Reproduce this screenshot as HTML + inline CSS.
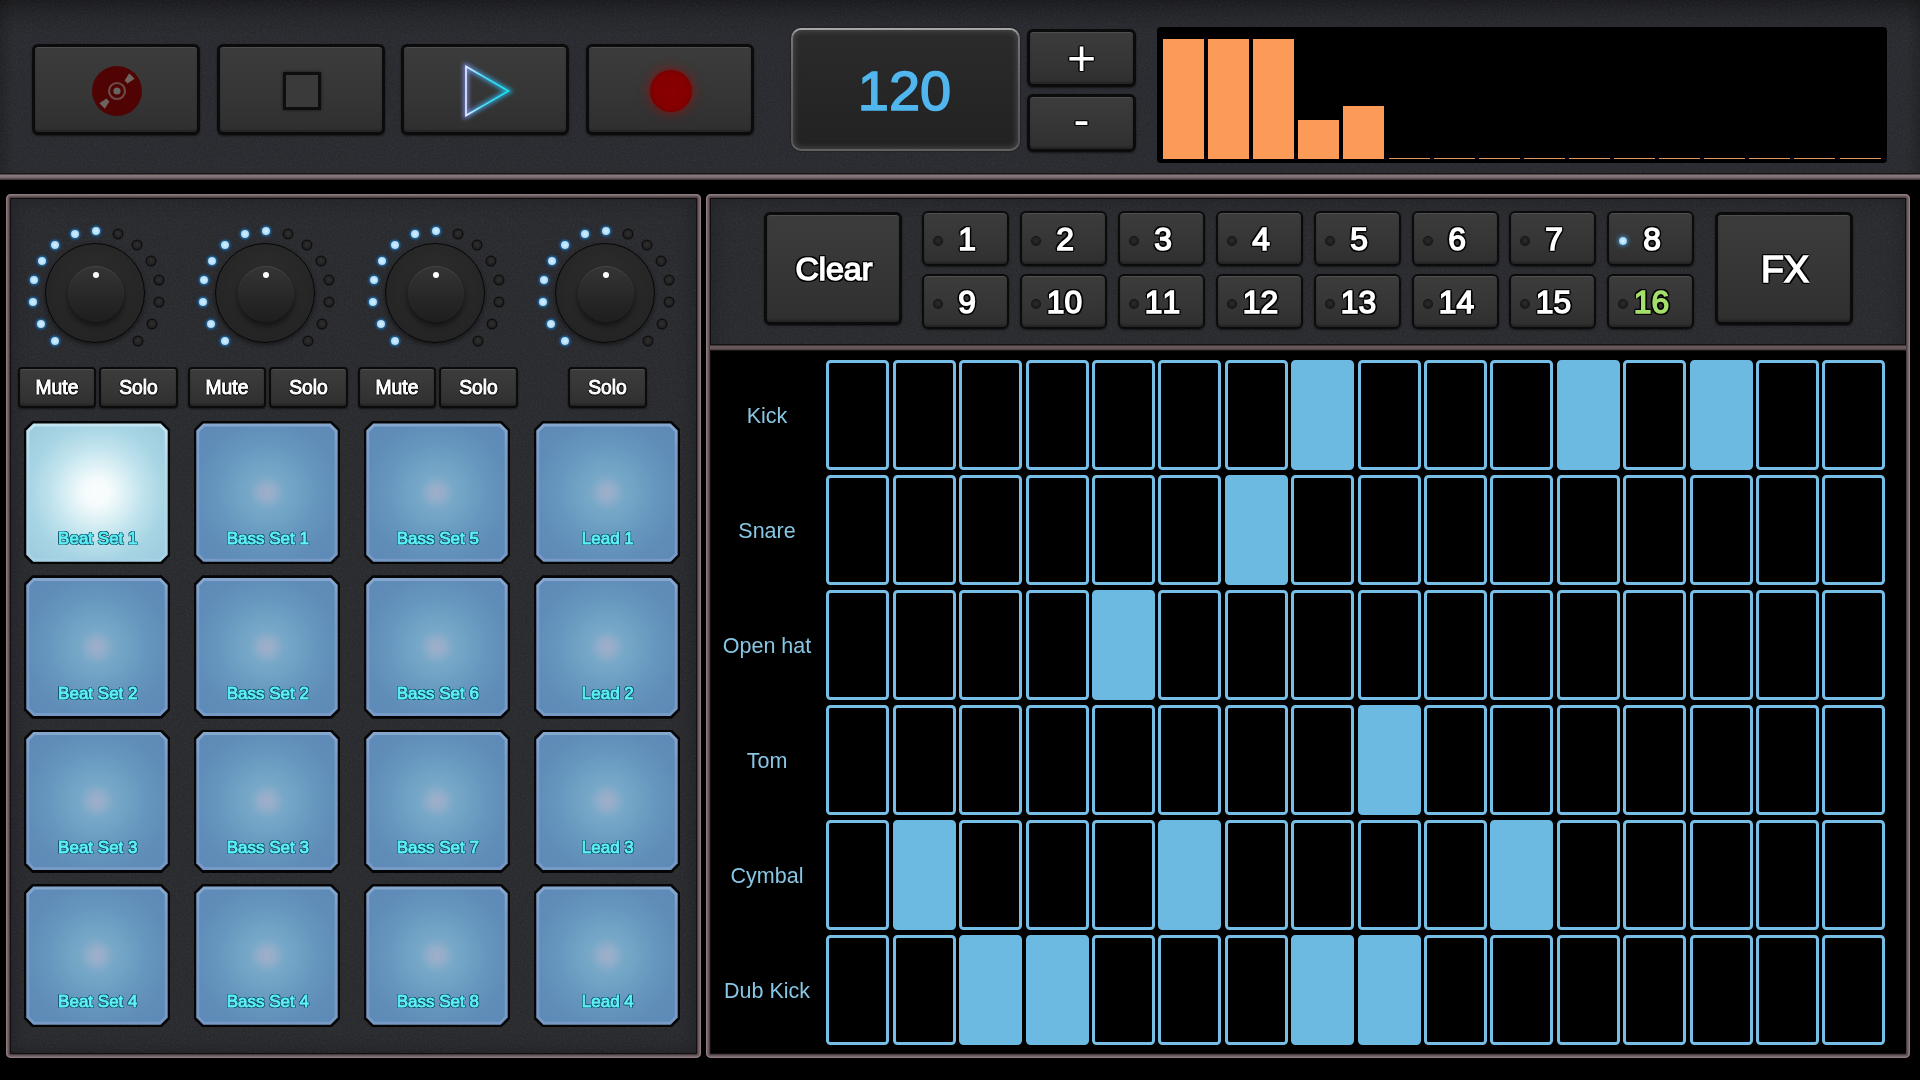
<!DOCTYPE html>
<html><head><meta charset="utf-8"><title>Beat Sequencer</title>
<style>
*{box-sizing:border-box;margin:0;padding:0}
html,body{width:1920px;height:1080px;background:#000;overflow:hidden;font-family:"Liberation Sans",sans-serif}
.abs,.btn,.pad,.cell,.led,.lbl,.knob,.bar{position:absolute}
#top{position:absolute;left:0;top:0;width:1920px;height:174px;background:linear-gradient(rgba(0,0,0,.36) 0,rgba(0,0,0,.2) 10px,rgba(0,0,0,.06) 24px,rgba(0,0,0,0) 36px),linear-gradient(90deg,rgba(0,0,0,.18) 0,rgba(0,0,0,0) 14px,rgba(0,0,0,0) calc(100% - 14px),rgba(0,0,0,.18) 100%),#2b2c31}
#topline{position:absolute;left:0;top:173px;width:1920px;height:7px;background:linear-gradient(#1a1516 0,#1a1516 1px,#8b7b7e 2px,#837275 4px,#5a4b4e 6px,#2a2022 7px)}
.panel{position:absolute;background:#2b2c30;border-radius:5px;box-shadow:inset 0 0 0 1.5px #8b7b7e,inset 0 0 0 3px #66575a,inset 0 0 0 4px #4b3e41,inset 0 0 0 5px #120e10,inset 0 0 16px 8px rgba(0,0,0,.22)}
.btn{background:linear-gradient(#3c3c3c,#353535 60%,#2f2f2f);border:3px solid #0b0b0c;border-radius:6px;box-shadow:inset 0 1px 0 rgba(255,255,255,.10),inset 0 -2px 2px rgba(0,0,0,.25),0 1px 2px rgba(0,0,0,.55);color:#fff;display:flex;align-items:center;justify-content:center;text-shadow:2.4px 0px .5px rgba(0,0,0,.85),-2.4px 0px .5px rgba(0,0,0,.85),0px 2.4px .5px rgba(0,0,0,.85),0px -2.4px .5px rgba(0,0,0,.85),1.7px 1.7px .5px rgba(0,0,0,.85),-1.7px 1.7px .5px rgba(0,0,0,.85),1.7px -1.7px .5px rgba(0,0,0,.85),-1.7px -1.7px .5px rgba(0,0,0,.85)}
.btn span{display:block}
.num{font-kerning:none;font-size:31.8px;-webkit-text-stroke:1.5px currentColor;padding-top:2px;border-width:2.2px}
.num i{position:absolute;left:10.3px;top:50%;width:8px;height:8px;margin-top:-1.5px;border-radius:50%;background:radial-gradient(circle at 50% 45%,#2e2e2e 0,#1c1c1c 60%,#101010 100%);box-shadow:0 0 0 1px #151515}
.num i.on{background:radial-gradient(circle,#e8f6ff 0,#a8dcff 55%,#58b4f0 100%);box-shadow:0 0 4px 1px rgba(70,160,230,.8)}
.ms{text-shadow:1.5px 0px 0.5px rgba(0,0,0,0.55),-1.5px 0px 0.5px rgba(0,0,0,0.55),0px 1.5px 0.5px rgba(0,0,0,0.55),0px -1.5px 0.5px rgba(0,0,0,0.55),1.06px 1.06px 0.5px rgba(0,0,0,0.55),-1.06px 1.06px 0.5px rgba(0,0,0,0.55),1.06px -1.06px 0.5px rgba(0,0,0,0.55),-1.06px -1.06px 0.5px rgba(0,0,0,0.55);font-size:19.3px;-webkit-text-stroke:1px #fff;padding-top:1px;border-width:2px;border-radius:4px}
.pad{background:#050506;clip-path:polygon(8.6px 0,calc(100% - 8.6px) 0,100% 8.6px,100% calc(100% - 8.6px),calc(100% - 8.6px) 100%,8.6px 100%,0 calc(100% - 8.6px),0 8.6px)}
.pad .pb{position:absolute;left:2.6px;top:2.6px;right:2.6px;bottom:2.6px;background:linear-gradient(#86a8cf,#7a9cc9 20%,#7799c6);clip-path:polygon(7.1px 0,calc(100% - 7.1px) 0,100% 7.1px,100% calc(100% - 7.1px),calc(100% - 7.1px) 100%,7.1px 100%,0 calc(100% - 7.1px),0 7.1px)}
.pad .pf{position:absolute;left:3px;top:3px;right:3px;bottom:3px;clip-path:polygon(5.3px 0,calc(100% - 5.3px) 0,100% 5.3px,100% calc(100% - 5.3px),calc(100% - 5.3px) 100%,5.3px 100%,0 calc(100% - 5.3px),0 5.3px);background:radial-gradient(circle at 50% 50%,#a1adca 0,#92aeca 8%,#78a8c8 18%,#6fa2c4 32%,#6696be 52%,#5f8db8 75%,#5d89b6 100%)}
.pad.on .pb{background:linear-gradient(#c4e6f2,#b5dcec 25%,#a9d2e8)}
.pad.on .pf{background:radial-gradient(circle at 50% 50%,#fbfdfd 0,#f6fbfc 13%,#dff2f6 28%,#c2e4ee 47%,#a8d5e4 70%,#9ccbde 100%)}
.pad span{position:absolute;left:1px;right:0;top:108.6px;text-align:center;font-size:17px;color:#5ef0f8;-webkit-text-stroke:.9px #5ef0f8;text-shadow:-1px 0 0 #0f4a5c,1px 0 0 #0f4a5c,0 -1px 0 #0f4a5c,0 1px 0 #0f4a5c,1px 1px 0 #0f4a5c,-1px -1px 0 #0f4a5c,1px -1px 0 #0f4a5c,-1px 1px 0 #0f4a5c}
.cell{width:63px;height:110.4px;border:3.7px solid #76bee5;border-radius:4.5px;background:#000}
.cell.on{background:#6cb9e1;border-color:#6cb9e1}
.lbl{width:118px;text-align:center;font-size:21.5px;color:#88c6e5;line-height:24px}
.led{width:8px;height:8px;border-radius:50%}
.led.on{background:radial-gradient(circle,#d8f0ff 0,#b4e0fc 55%,#86c8f0 100%);box-shadow:0 0 1.5px 1.5px rgba(30,100,155,.9),0 0 4px 2px rgba(25,85,140,.3)}
.led.off{background:radial-gradient(circle at 50% 45%,#303030 0,#262626 45%,#151515 100%);box-shadow:0 0 0 1.5px #0f0f0f}
.knob{width:100px;height:100px;border-radius:50%;background:radial-gradient(circle at 50% 40%,#2e2e2e 0,#262626 60%,#202020 100%);border:1.5px solid #050505;box-shadow:0 2px 4px rgba(0,0,0,.5)}
.knob b{position:absolute;left:21.5px;top:22px;width:56px;height:56px;border-radius:50%;background:linear-gradient(#353535,#262626 60%,#1e1e1e);box-shadow:0 4px 6px rgba(0,0,0,.55),inset 0 1px 0 rgba(255,255,255,.08)}
.knob u{position:absolute;left:47px;top:27.9px;width:6px;height:6px;border-radius:50%;background:#fff}
.bar{background:#fc9b57}
.btn,.pad span,.lbl,.tempo{will-change:transform}
</style></head><body>
<div id="top"></div><svg width="0" height="0" style="position:absolute"><defs><filter id="nz" x="0" y="0" width="100%" height="100%"><feTurbulence type="fractalNoise" baseFrequency=".55" numOctaves="2" seed="7" result="t"/><feColorMatrix in="t" type="matrix" values="0 0 0 0 1  0 0 0 0 1  0 0 0 0 1  .9 .9 .9 0 -1.15"/></filter><filter id="nzd" x="0" y="0" width="100%" height="100%"><feTurbulence type="fractalNoise" baseFrequency=".55" numOctaves="2" seed="19" result="t"/><feColorMatrix in="t" type="matrix" values="0 0 0 0 0  0 0 0 0 0  0 0 0 0 0  .9 .9 .9 0 -1.15"/></filter></defs></svg><svg class="abs" style="left:0px;top:0px" width="1920" height="173"><rect width="1920" height="173" filter="url(#nz)" opacity=".05"/><rect width="1920" height="173" filter="url(#nzd)" opacity=".10"/></svg><div id="topline"></div>

<div class="btn" style="left:32px;top:44px;width:168px;height:91px"><div style="margin-top:3px;margin-left:2px;display:flex"><svg width="60" height="60" viewBox="-30 -30 60 60"><circle r="25" fill="#500303"/><circle r="8" fill="none" stroke="#6b4a48" stroke-width="2.2"/><circle r="3.6" fill="#66665e"/><path d="M10.5 -7.6 L17.7 -12.2 L12.2 -17.7 L7.6 -10.5 Z M-10.5 7.6 L-17.7 12.2 L-12.2 17.7 L-7.6 10.5 Z" fill="#6e6360"/></svg></div></div>
<div class="btn" style="left:217px;top:44px;width:168px;height:91px"><div style="margin-top:3px;margin-left:2px;display:flex"><div style="width:38px;height:38px;border:3px solid #0e0e0e;background:#3a3a3a;box-shadow:0 0 3px rgba(0,0,0,.6)"></div></div></div>
<div class="btn" style="left:401px;top:44px;width:168px;height:91px"><div style="margin-top:3px;margin-left:2px;display:flex"><svg width="70" height="70" viewBox="-35 -35 70 70" style="overflow:visible"><defs><linearGradient id="pg" gradientUnits="userSpaceOnUse" x1="-20" x2="23" y1="0" y2="0"><stop offset="0" stop-color="#eef0ff"/><stop offset=".12" stop-color="#b8ecfb"/><stop offset=".4" stop-color="#48dcf2"/><stop offset="1" stop-color="#14e2f0"/></linearGradient><linearGradient id="pg2" gradientUnits="userSpaceOnUse" x1="-20" x2="23" y1="0" y2="0"><stop offset="0" stop-color="#7f8fea"/><stop offset=".25" stop-color="#4a9ae0"/><stop offset="1" stop-color="#20b4d8"/></linearGradient><filter id="gl" x="-50%" y="-50%" width="200%" height="200%"><feGaussianBlur stdDeviation="2"/></filter></defs><path d="M-20 -24.5 L22.5 0 L-20 24.5 Z" fill="none" stroke="url(#pg2)" stroke-width="5" filter="url(#gl)" opacity=".85"/><path d="M-20 -24.5 L22.5 0 L-20 24.5 Z" fill="none" stroke="url(#pg)" stroke-width="1.6" stroke-linejoin="miter"/></svg></div></div>
<div class="btn" style="left:586px;top:44px;width:168px;height:91px"><div style="margin-top:3px;margin-left:2px;display:flex"><div style="width:42px;height:42px;margin-left:-1px;margin-top:-1px;border-radius:50%;background:radial-gradient(circle at 50% 50%,#890000 0,#850000 55%,#700000 82%,#580000 100%);box-shadow:0 0 9px 5px rgba(150,22,22,.36),0 0 3px 1px rgba(120,10,10,.5)"></div></div></div>
<div class="abs" style="left:791px;top:28px;width:229px;height:123px;border-radius:10px;background:linear-gradient(#adadad,#747474 7%,#5e5e5e 50%,#555 92%,#626262);box-shadow:0 0 2px rgba(0,0,0,.7)"></div>
<div class="abs tempo" style="left:793px;top:30px;width:225px;height:119px;border-radius:8.5px;background:linear-gradient(#2b2b2b,#222);box-shadow:inset 0 0 5px 2px rgba(90,90,90,.55);display:flex;align-items:center;justify-content:center;color:#52b6ee;font-size:56px;padding-top:1px;padding-right:2px;-webkit-text-stroke:1.5px #52b6ee;text-shadow:0 0 2px #0a2a44">120</div>
<div class="btn" style="left:1027px;top:29px;width:109px;height:58px;font-size:50px;-webkit-text-stroke:0;text-shadow:1.3px 0px 0.5px rgba(0,0,0,0.85),-1.3px 0px 0.5px rgba(0,0,0,0.85),0px 1.3px 0.5px rgba(0,0,0,0.85),0px -1.3px 0.5px rgba(0,0,0,0.85),0.92px 0.92px 0.5px rgba(0,0,0,0.85),-0.92px 0.92px 0.5px rgba(0,0,0,0.85),0.92px -0.92px 0.5px rgba(0,0,0,0.85),-0.92px -0.92px 0.5px rgba(0,0,0,0.85)"><span style="margin-top:.5px">+</span></div>
<div class="btn" style="left:1027px;top:94px;width:109px;height:58px;font-size:48px;-webkit-text-stroke:0;text-shadow:1.3px 0px 0.5px rgba(0,0,0,0.85),-1.3px 0px 0.5px rgba(0,0,0,0.85),0px 1.3px 0.5px rgba(0,0,0,0.85),0px -1.3px 0.5px rgba(0,0,0,0.85),0.92px 0.92px 0.5px rgba(0,0,0,0.85),-0.92px 0.92px 0.5px rgba(0,0,0,0.85),0.92px -0.92px 0.5px rgba(0,0,0,0.85),-0.92px -0.92px 0.5px rgba(0,0,0,0.85)"><span style="margin-top:-8px">-</span></div>
<div class="abs" style="left:1157px;top:27px;width:730px;height:136px;background:#000;border-radius:4px"></div>
<div class="bar" style="left:1163.0px;top:39px;width:41px;height:119.6px"></div>
<div class="bar" style="left:1208.1px;top:39px;width:41px;height:119.6px"></div>
<div class="bar" style="left:1253.2px;top:39px;width:41px;height:119.6px"></div>
<div class="bar" style="left:1298.3px;top:120px;width:41px;height:38.6px"></div>
<div class="bar" style="left:1343.4px;top:106px;width:41px;height:52.6px"></div>
<div class="bar" style="left:1388.5px;top:158px;width:41px;height:1px;background:#e0955c"></div>
<div class="bar" style="left:1433.6px;top:158px;width:41px;height:1px;background:#e0955c"></div>
<div class="bar" style="left:1478.7px;top:158px;width:41px;height:1px;background:#e0955c"></div>
<div class="bar" style="left:1523.8px;top:158px;width:41px;height:1px;background:#e0955c"></div>
<div class="bar" style="left:1568.9px;top:158px;width:41px;height:1px;background:#e0955c"></div>
<div class="bar" style="left:1614.0px;top:158px;width:41px;height:1px;background:#e0955c"></div>
<div class="bar" style="left:1659.1px;top:158px;width:41px;height:1px;background:#e0955c"></div>
<div class="bar" style="left:1704.2px;top:158px;width:41px;height:1px;background:#e0955c"></div>
<div class="bar" style="left:1749.3px;top:158px;width:41px;height:1px;background:#e0955c"></div>
<div class="bar" style="left:1794.4px;top:158px;width:41px;height:1px;background:#e0955c"></div>
<div class="bar" style="left:1839.5px;top:158px;width:41px;height:1px;background:#e0955c"></div>
<div class="panel" style="left:6px;top:194px;width:695px;height:864px"></div>
<div class="panel" style="left:706px;top:194px;width:1204px;height:864px"></div>
<svg class="abs" style="left:11px;top:199px" width="685" height="854"><rect width="685" height="854" filter="url(#nz)" opacity=".05"/><rect width="685" height="854" filter="url(#nzd)" opacity=".10"/></svg>
<svg class="abs" style="left:711px;top:199px" width="1194" height="146"><rect width="1194" height="146" filter="url(#nz)" opacity=".05"/><rect width="1194" height="146" filter="url(#nzd)" opacity=".10"/></svg>
<div class="led on" style="left:50.5px;top:336.8px"></div>
<div class="led on" style="left:36.6px;top:319.5px"></div>
<div class="led on" style="left:29.4px;top:298.0px"></div>
<div class="led on" style="left:29.8px;top:276.4px"></div>
<div class="led on" style="left:37.9px;top:256.9px"></div>
<div class="led on" style="left:51.1px;top:240.8px"></div>
<div class="led on" style="left:70.6px;top:230.2px"></div>
<div class="led on" style="left:92.2px;top:226.5px"></div>
<div class="led off" style="left:113.8px;top:230.2px"></div>
<div class="led off" style="left:133.3px;top:240.8px"></div>
<div class="led off" style="left:146.6px;top:256.9px"></div>
<div class="led off" style="left:154.7px;top:276.4px"></div>
<div class="led off" style="left:155.1px;top:298.0px"></div>
<div class="led off" style="left:147.8px;top:319.5px"></div>
<div class="led off" style="left:133.9px;top:336.8px"></div>
<div class="knob" style="left:45.2px;top:242.8px"><b></b><u></u></div>
<div class="led on" style="left:220.5px;top:336.8px"></div>
<div class="led on" style="left:206.6px;top:319.5px"></div>
<div class="led on" style="left:199.3px;top:298.0px"></div>
<div class="led on" style="left:199.8px;top:276.4px"></div>
<div class="led on" style="left:207.8px;top:256.9px"></div>
<div class="led on" style="left:221.0px;top:240.8px"></div>
<div class="led on" style="left:240.5px;top:230.2px"></div>
<div class="led on" style="left:262.2px;top:226.5px"></div>
<div class="led off" style="left:283.8px;top:230.2px"></div>
<div class="led off" style="left:303.3px;top:240.8px"></div>
<div class="led off" style="left:316.6px;top:256.9px"></div>
<div class="led off" style="left:324.6px;top:276.4px"></div>
<div class="led off" style="left:325.1px;top:298.0px"></div>
<div class="led off" style="left:317.8px;top:319.5px"></div>
<div class="led off" style="left:303.9px;top:336.8px"></div>
<div class="knob" style="left:215.2px;top:242.8px"><b></b><u></u></div>
<div class="led on" style="left:390.5px;top:336.8px"></div>
<div class="led on" style="left:376.6px;top:319.5px"></div>
<div class="led on" style="left:369.3px;top:298.0px"></div>
<div class="led on" style="left:369.8px;top:276.4px"></div>
<div class="led on" style="left:377.8px;top:256.9px"></div>
<div class="led on" style="left:391.1px;top:240.8px"></div>
<div class="led on" style="left:410.6px;top:230.2px"></div>
<div class="led on" style="left:432.2px;top:226.5px"></div>
<div class="led off" style="left:453.8px;top:230.2px"></div>
<div class="led off" style="left:473.3px;top:240.8px"></div>
<div class="led off" style="left:486.6px;top:256.9px"></div>
<div class="led off" style="left:494.6px;top:276.4px"></div>
<div class="led off" style="left:495.1px;top:298.0px"></div>
<div class="led off" style="left:487.8px;top:319.5px"></div>
<div class="led off" style="left:473.9px;top:336.8px"></div>
<div class="knob" style="left:385.2px;top:242.8px"><b></b><u></u></div>
<div class="led on" style="left:560.5px;top:336.8px"></div>
<div class="led on" style="left:546.6px;top:319.5px"></div>
<div class="led on" style="left:539.4px;top:298.0px"></div>
<div class="led on" style="left:539.8px;top:276.4px"></div>
<div class="led on" style="left:547.9px;top:256.9px"></div>
<div class="led on" style="left:561.1px;top:240.8px"></div>
<div class="led on" style="left:580.6px;top:230.2px"></div>
<div class="led on" style="left:602.2px;top:226.5px"></div>
<div class="led off" style="left:623.9px;top:230.2px"></div>
<div class="led off" style="left:643.4px;top:240.8px"></div>
<div class="led off" style="left:656.6px;top:256.9px"></div>
<div class="led off" style="left:664.7px;top:276.4px"></div>
<div class="led off" style="left:665.1px;top:298.0px"></div>
<div class="led off" style="left:657.8px;top:319.5px"></div>
<div class="led off" style="left:643.9px;top:336.8px"></div>
<div class="knob" style="left:555.2px;top:242.8px"><b></b><u></u></div>
<div class="btn ms" style="left:18px;top:367px;width:78px;height:41px">Mute</div>
<div class="btn ms" style="left:99px;top:367px;width:79px;height:41px">Solo</div>
<div class="btn ms" style="left:188px;top:367px;width:78px;height:41px">Mute</div>
<div class="btn ms" style="left:269px;top:367px;width:79px;height:41px">Solo</div>
<div class="btn ms" style="left:358px;top:367px;width:78px;height:41px">Mute</div>
<div class="btn ms" style="left:439px;top:367px;width:79px;height:41px">Solo</div>
<div class="btn ms" style="left:568px;top:367px;width:79px;height:41px">Solo</div>
<div class="pad on" style="left:23.7px;top:420.9px;width:146.6px;height:143.5px"><div class="pb"><div class="pf"></div></div><span>Beat Set 1</span></div>
<div class="pad" style="left:193.7px;top:420.9px;width:146.6px;height:143.5px"><div class="pb"><div class="pf"></div></div><span>Bass Set 1</span></div>
<div class="pad" style="left:363.7px;top:420.9px;width:146.6px;height:143.5px"><div class="pb"><div class="pf"></div></div><span>Bass Set 5</span></div>
<div class="pad" style="left:533.7px;top:420.9px;width:146.6px;height:143.5px"><div class="pb"><div class="pf"></div></div><span>Lead 1</span></div>
<div class="pad" style="left:23.7px;top:575.2px;width:146.6px;height:143.5px"><div class="pb"><div class="pf"></div></div><span>Beat Set 2</span></div>
<div class="pad" style="left:193.7px;top:575.2px;width:146.6px;height:143.5px"><div class="pb"><div class="pf"></div></div><span>Bass Set 2</span></div>
<div class="pad" style="left:363.7px;top:575.2px;width:146.6px;height:143.5px"><div class="pb"><div class="pf"></div></div><span>Bass Set 6</span></div>
<div class="pad" style="left:533.7px;top:575.2px;width:146.6px;height:143.5px"><div class="pb"><div class="pf"></div></div><span>Lead 2</span></div>
<div class="pad" style="left:23.7px;top:729.5px;width:146.6px;height:143.5px"><div class="pb"><div class="pf"></div></div><span>Beat Set 3</span></div>
<div class="pad" style="left:193.7px;top:729.5px;width:146.6px;height:143.5px"><div class="pb"><div class="pf"></div></div><span>Bass Set 3</span></div>
<div class="pad" style="left:363.7px;top:729.5px;width:146.6px;height:143.5px"><div class="pb"><div class="pf"></div></div><span>Bass Set 7</span></div>
<div class="pad" style="left:533.7px;top:729.5px;width:146.6px;height:143.5px"><div class="pb"><div class="pf"></div></div><span>Lead 3</span></div>
<div class="pad" style="left:23.7px;top:883.8px;width:146.6px;height:143.5px"><div class="pb"><div class="pf"></div></div><span>Beat Set 4</span></div>
<div class="pad" style="left:193.7px;top:883.8px;width:146.6px;height:143.5px"><div class="pb"><div class="pf"></div></div><span>Bass Set 4</span></div>
<div class="pad" style="left:363.7px;top:883.8px;width:146.6px;height:143.5px"><div class="pb"><div class="pf"></div></div><span>Bass Set 8</span></div>
<div class="pad" style="left:533.7px;top:883.8px;width:146.6px;height:143.5px"><div class="pb"><div class="pf"></div></div><span>Lead 4</span></div>
<div class="abs" style="left:710px;top:344px;width:1196px;height:7px;background:linear-gradient(#151112 0,#151112 1px,#6b5b5e 2px,#64555a 5px,#3a2f31 6px,#000 7px)"></div>
<div class="abs" style="left:711px;top:351px;width:1195px;height:702px;background:#000"></div>
<div class="btn" style="left:764px;top:212px;width:138px;height:113px;font-size:32.2px;-webkit-text-stroke:1.5px #fff;padding-top:2px;padding-left:2px">Clear</div>
<div class="btn" style="left:1715px;top:212px;width:138px;height:113px;font-size:37.5px;-webkit-text-stroke:1.6px #fff;padding-top:1px;padding-left:2px">FX</div>
<div class="btn num" style="left:922.0px;top:211px;width:87px;height:55px;padding-left:3px"><i></i>1</div>
<div class="btn num" style="left:1019.9px;top:211px;width:87px;height:55px;padding-left:3px"><i></i>2</div>
<div class="btn num" style="left:1117.8px;top:211px;width:87px;height:55px;padding-left:3px"><i></i>3</div>
<div class="btn num" style="left:1215.7px;top:211px;width:87px;height:55px;padding-left:3px"><i></i>4</div>
<div class="btn num" style="left:1313.6px;top:211px;width:87px;height:55px;padding-left:3px"><i></i>5</div>
<div class="btn num" style="left:1411.5px;top:211px;width:87px;height:55px;padding-left:3px"><i></i>6</div>
<div class="btn num" style="left:1509.4px;top:211px;width:87px;height:55px;padding-left:3px"><i></i>7</div>
<div class="btn num" style="left:1607.3px;top:211px;width:87px;height:55px;padding-left:3px"><i class="on"></i>8</div>
<div class="btn num" style="left:922.0px;top:274px;width:87px;height:55px;padding-left:3px"><i></i>9</div>
<div class="btn num" style="left:1019.9px;top:274px;width:87px;height:55px;padding-left:2px"><i></i>10</div>
<div class="btn num" style="left:1117.8px;top:274px;width:87px;height:55px;padding-left:2px"><i></i>11</div>
<div class="btn num" style="left:1215.7px;top:274px;width:87px;height:55px;padding-left:2px"><i></i>12</div>
<div class="btn num" style="left:1313.6px;top:274px;width:87px;height:55px;padding-left:2px"><i></i>13</div>
<div class="btn num" style="left:1411.5px;top:274px;width:87px;height:55px;padding-left:2px"><i></i>14</div>
<div class="btn num" style="left:1509.4px;top:274px;width:87px;height:55px;padding-left:2px"><i></i>15</div>
<div class="btn num" style="left:1607.3px;top:274px;width:87px;height:55px;padding-left:2px;color:#a5e06a"><i></i>16</div>
<div class="lbl" style="left:708px;top:404.0px">Kick</div>
<div class="cell" style="left:826.3px;top:359.8px"></div>
<div class="cell" style="left:892.7px;top:359.8px"></div>
<div class="cell" style="left:959.1px;top:359.8px"></div>
<div class="cell" style="left:1025.5px;top:359.8px"></div>
<div class="cell" style="left:1091.9px;top:359.8px"></div>
<div class="cell" style="left:1158.3px;top:359.8px"></div>
<div class="cell" style="left:1224.7px;top:359.8px"></div>
<div class="cell on" style="left:1291.1px;top:359.8px"></div>
<div class="cell" style="left:1357.5px;top:359.8px"></div>
<div class="cell" style="left:1423.9px;top:359.8px"></div>
<div class="cell" style="left:1490.3px;top:359.8px"></div>
<div class="cell on" style="left:1556.7px;top:359.8px"></div>
<div class="cell" style="left:1623.1px;top:359.8px"></div>
<div class="cell on" style="left:1689.5px;top:359.8px"></div>
<div class="cell" style="left:1755.9px;top:359.8px"></div>
<div class="cell" style="left:1822.3px;top:359.8px"></div>
<div class="lbl" style="left:708px;top:519.0px">Snare</div>
<div class="cell" style="left:826.3px;top:474.8px"></div>
<div class="cell" style="left:892.7px;top:474.8px"></div>
<div class="cell" style="left:959.1px;top:474.8px"></div>
<div class="cell" style="left:1025.5px;top:474.8px"></div>
<div class="cell" style="left:1091.9px;top:474.8px"></div>
<div class="cell" style="left:1158.3px;top:474.8px"></div>
<div class="cell on" style="left:1224.7px;top:474.8px"></div>
<div class="cell" style="left:1291.1px;top:474.8px"></div>
<div class="cell" style="left:1357.5px;top:474.8px"></div>
<div class="cell" style="left:1423.9px;top:474.8px"></div>
<div class="cell" style="left:1490.3px;top:474.8px"></div>
<div class="cell" style="left:1556.7px;top:474.8px"></div>
<div class="cell" style="left:1623.1px;top:474.8px"></div>
<div class="cell" style="left:1689.5px;top:474.8px"></div>
<div class="cell" style="left:1755.9px;top:474.8px"></div>
<div class="cell" style="left:1822.3px;top:474.8px"></div>
<div class="lbl" style="left:708px;top:634.0px">Open hat</div>
<div class="cell" style="left:826.3px;top:589.8px"></div>
<div class="cell" style="left:892.7px;top:589.8px"></div>
<div class="cell" style="left:959.1px;top:589.8px"></div>
<div class="cell" style="left:1025.5px;top:589.8px"></div>
<div class="cell on" style="left:1091.9px;top:589.8px"></div>
<div class="cell" style="left:1158.3px;top:589.8px"></div>
<div class="cell" style="left:1224.7px;top:589.8px"></div>
<div class="cell" style="left:1291.1px;top:589.8px"></div>
<div class="cell" style="left:1357.5px;top:589.8px"></div>
<div class="cell" style="left:1423.9px;top:589.8px"></div>
<div class="cell" style="left:1490.3px;top:589.8px"></div>
<div class="cell" style="left:1556.7px;top:589.8px"></div>
<div class="cell" style="left:1623.1px;top:589.8px"></div>
<div class="cell" style="left:1689.5px;top:589.8px"></div>
<div class="cell" style="left:1755.9px;top:589.8px"></div>
<div class="cell" style="left:1822.3px;top:589.8px"></div>
<div class="lbl" style="left:708px;top:749.0px">Tom</div>
<div class="cell" style="left:826.3px;top:704.8px"></div>
<div class="cell" style="left:892.7px;top:704.8px"></div>
<div class="cell" style="left:959.1px;top:704.8px"></div>
<div class="cell" style="left:1025.5px;top:704.8px"></div>
<div class="cell" style="left:1091.9px;top:704.8px"></div>
<div class="cell" style="left:1158.3px;top:704.8px"></div>
<div class="cell" style="left:1224.7px;top:704.8px"></div>
<div class="cell" style="left:1291.1px;top:704.8px"></div>
<div class="cell on" style="left:1357.5px;top:704.8px"></div>
<div class="cell" style="left:1423.9px;top:704.8px"></div>
<div class="cell" style="left:1490.3px;top:704.8px"></div>
<div class="cell" style="left:1556.7px;top:704.8px"></div>
<div class="cell" style="left:1623.1px;top:704.8px"></div>
<div class="cell" style="left:1689.5px;top:704.8px"></div>
<div class="cell" style="left:1755.9px;top:704.8px"></div>
<div class="cell" style="left:1822.3px;top:704.8px"></div>
<div class="lbl" style="left:708px;top:864.0px">Cymbal</div>
<div class="cell" style="left:826.3px;top:819.8px"></div>
<div class="cell on" style="left:892.7px;top:819.8px"></div>
<div class="cell" style="left:959.1px;top:819.8px"></div>
<div class="cell" style="left:1025.5px;top:819.8px"></div>
<div class="cell" style="left:1091.9px;top:819.8px"></div>
<div class="cell on" style="left:1158.3px;top:819.8px"></div>
<div class="cell" style="left:1224.7px;top:819.8px"></div>
<div class="cell" style="left:1291.1px;top:819.8px"></div>
<div class="cell" style="left:1357.5px;top:819.8px"></div>
<div class="cell" style="left:1423.9px;top:819.8px"></div>
<div class="cell on" style="left:1490.3px;top:819.8px"></div>
<div class="cell" style="left:1556.7px;top:819.8px"></div>
<div class="cell" style="left:1623.1px;top:819.8px"></div>
<div class="cell" style="left:1689.5px;top:819.8px"></div>
<div class="cell" style="left:1755.9px;top:819.8px"></div>
<div class="cell" style="left:1822.3px;top:819.8px"></div>
<div class="lbl" style="left:708px;top:979.0px">Dub Kick</div>
<div class="cell" style="left:826.3px;top:934.8px"></div>
<div class="cell" style="left:892.7px;top:934.8px"></div>
<div class="cell on" style="left:959.1px;top:934.8px"></div>
<div class="cell on" style="left:1025.5px;top:934.8px"></div>
<div class="cell" style="left:1091.9px;top:934.8px"></div>
<div class="cell" style="left:1158.3px;top:934.8px"></div>
<div class="cell" style="left:1224.7px;top:934.8px"></div>
<div class="cell on" style="left:1291.1px;top:934.8px"></div>
<div class="cell on" style="left:1357.5px;top:934.8px"></div>
<div class="cell" style="left:1423.9px;top:934.8px"></div>
<div class="cell" style="left:1490.3px;top:934.8px"></div>
<div class="cell" style="left:1556.7px;top:934.8px"></div>
<div class="cell" style="left:1623.1px;top:934.8px"></div>
<div class="cell" style="left:1689.5px;top:934.8px"></div>
<div class="cell" style="left:1755.9px;top:934.8px"></div>
<div class="cell" style="left:1822.3px;top:934.8px"></div>
</body></html>
